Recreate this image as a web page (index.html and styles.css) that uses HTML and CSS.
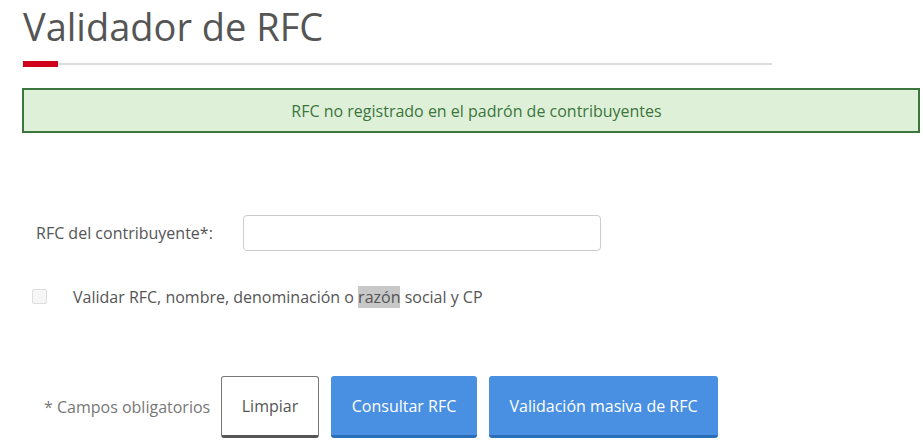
FILE: index.html
```html
<!DOCTYPE html>
<html lang="es">
<head>
<meta charset="utf-8">
<title>Validador de RFC</title>
<link rel="stylesheet" href="styles.css">
</head>
<body>
<main class="page">
  <h1 class="title">Validador de RFC</h1>
  <div class="rule"><span class="rule-accent"></span><span class="rule-line"></span></div>
  <div class="alert">RFC no registrado en el padrón de contribuyentes</div>
  <form class="form">
    <div class="field-row">
      <label class="field-label" for="rfc">RFC del contribuyente*:</label>
      <input class="field-input" id="rfc" type="text">
    </div>
    <div class="check-row">
      <span class="checkbox"></span>
      <span class="check-text">Validar RFC, nombre, denominación o <span class="sel">razón</span> social y CP</span>
    </div>
    <div class="actions">
      <span class="required-note">* Campos obligatorios</span>
      <button type="button" class="btn btn-default">Limpiar</button>
      <button type="button" class="btn btn-primary btn-consult">Consultar RFC</button>
      <button type="button" class="btn btn-primary btn-bulk">Validación masiva de RFC</button>
    </div>
  </form>
</main>
</body>
</html>
```

FILE: styles.css
```css
* { box-sizing: border-box; }
html, body { margin: 0; padding: 0; background: #fff; }
body {
  font-family: "Open Sans", "DejaVu Sans", sans-serif;
  color: #555;
}
.page {
  padding: 0 3px 0 22px;
}
.title {
  margin: 0;
  font-size: 38px;
  font-weight: 400;
  line-height: 52px;
  color: #555;
  padding-left: 1px;
}
.rule {
  display: flex;
  align-items: center;
  width: 749px;
  margin-top: 9px;
  margin-left: 1px;
  height: 6px;
}
.rule-accent {
  width: 35px;
  height: 6px;
  background: #d0021b;
}
.rule-line {
  flex: 1;
  height: 2px;
  background: #dcdcdc;
}
.alert {
  margin-top: 21px;
  width: 898px;
  height: 45px;
  border: 2px solid #3c763d;
  background: #dff0d8;
  color: #3c763d;
  font-size: 16px;
  display: flex;
  align-items: center;
  justify-content: center;
  padding-left: 11px;
}
.form {
  margin-top: 82px;
}
.field-row {
  display: flex;
  align-items: center;
  height: 36px;
}
.field-label {
  width: 221px;
  padding-left: 14px;
  font-size: 16px;
  color: #555;
}
.field-input {
  width: 358px;
  height: 36px;
  border: 1px solid #ccc;
  border-radius: 4px;
  margin: 0;
  padding: 6px 12px;
  font: inherit;
}
.check-row {
  display: flex;
  align-items: center;
  margin-top: 38px;
  height: 15px;
  padding-left: 10px;
}
.checkbox {
  width: 15px;
  height: 15px;
  border: 1px solid #ddd;
  border-radius: 2px;
  background: #f6f6f6;
  margin-right: 26px;
}
.check-text {
  font-size: 16px;
  color: #555;
}
.sel {
  background: #c8c8c8;
}
.actions {
  display: flex;
  align-items: center;
  margin-top: 72px;
  gap: 12px;
}
.required-note {
  width: 187px;
  padding-left: 22px;
  font-size: 16px;
  color: #777;
  white-space: nowrap;
}
.btn {
  height: 62px;
  font-family: inherit;
  font-size: 16px;
  border-radius: 3px;
  padding: 0;
  cursor: pointer;
}
.btn-default {
  width: 98px;
  background: #fff;
  color: #555;
  border: 1px solid #777;
  border-bottom: 3px solid #555;
}
.btn-primary {
  background: #4a90e2;
  color: #fff;
  border: none;
  border-bottom: 3px solid #2c6db8;
}
.btn-consult { width: 146px; }
.btn-bulk { width: 229px; }
```
